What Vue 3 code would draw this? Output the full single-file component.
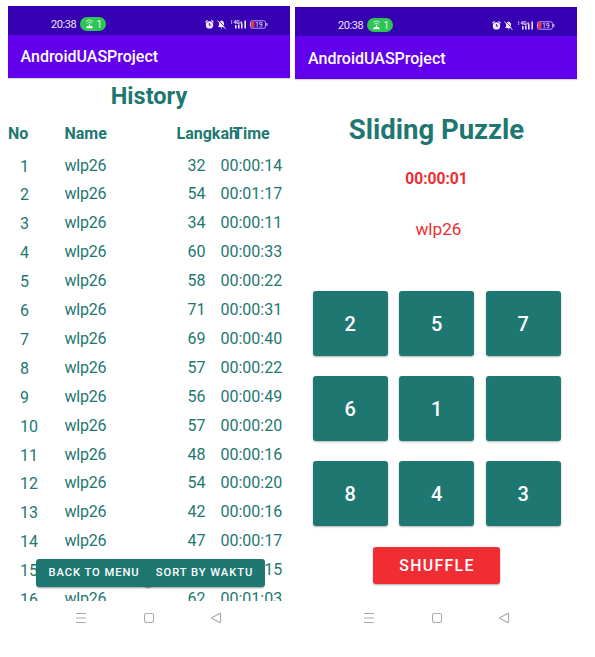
<script setup>
import { h } from 'vue'

const steps = [32, 54, 34, 60, 58, 71, 69, 57, 56, 57, 48, 54, 42, 47, 57, 62]
const times = ['00:14', '01:17', '00:11', '00:33', '00:22', '00:31', '00:40', '00:22',
  '00:49', '00:20', '00:16', '00:20', '00:16', '00:17', '00:15', '01:03']
const rows = steps.map((s, i) => ({ no: i + 1, steps: s, time: '00:' + times[i] }))
const tiles = ['2', '5', '7', '6', '1', '', '8', '4', '3']
const screens = ['history', 'puzzle']

const line = (d, w = 1) => h('path', { d, fill: 'none', stroke: '#fff', 'stroke-width': w, 'stroke-linecap': 'round' })

const HotspotIcon = () => h('svg', { width: 9, height: 10, viewBox: '0 0 9 10' }, [
  line('M1.2 2.4C3 .6 6 .6 7.8 2.4M2.6 4C3.7 3 5.3 3 6.4 4', 0.8),
  h('path', { d: 'M3.9 4.8h1.2v2.1H7L8 9.3H1L2 6.9h1.9z', fill: '#fff' })
])
const AlarmIcon = () => h('svg', { width: 9, height: 9, viewBox: '0 0 9 9' }, [
  line('M.8 1.9L2.2.7M8.2 1.9L6.8.7', 1.1),
  h('circle', { cx: 4.5, cy: 4.9, r: 3.7, fill: '#eeeaf8' }),
  h('path', { d: 'M4.4 3v2.2h1.7', fill: 'none', stroke: '#3700b3', 'stroke-width': 0.9 })
])
const MuteIcon = () => h('svg', { width: 9, height: 9, viewBox: '0 0 9 9' }, [
  h('path', { d: 'M4.5.5C6.2.8 7 2 7 3.5V5.6L8 7H1l1-1.4V3.5C2 2 2.8.8 4.5.5zM3.5 7.5h2L4.5 8.7z', fill: '#eeeaf8' }),
  h('path', { d: 'M1.2 0L8.8 8', stroke: '#3700b3', 'stroke-width': 0.8 }),
  line('M.6.8L8.2 8.6', 0.9)
])
const SignalIcon = () => h('svg', { width: 17, height: 10, viewBox: '0 0 17 10' }, [
  h('path', { d: 'M5 6h1.6v3.5H5zM8 5.4h1.6v4.1H8zM11 4.2h1.6v5.3H11zM14.4 1.6H16v7.9h-1.6z', fill: '#e9e3f7' }),
  h('path', { d: 'M1 1.5h1.2v1.2H1zM1 3.6h1.2v1.2H1z', fill: '#d8ccf2' }),
  h('text', { x: 3.4, y: 5, 'font-size': 5, 'font-weight': 700, fill: '#e9e3f7' }, '4G+')
])
const BatteryIcon = () => h('svg', { width: 18, height: 9, viewBox: '0 0 18 9' }, [
  h('rect', { x: 0.5, y: 0.8, width: 15, height: 7.4, rx: 1.8, fill: 'none', stroke: '#c9bced', 'stroke-width': 0.9 }),
  h('rect', { x: 1.2, y: 1.5, width: 3.2, height: 6, rx: 0.8, fill: '#f5383c' }),
  h('text', { x: 4.9, y: 7, 'font-size': 7, fill: '#e9e3f7' }, '19'),
  line('M16.9 3.5v2', 0.9)
])
</script>

<template>
  <main class="page">
    <section v-for="screen in screens" :key="screen" class="phone" :class="screen">
      <header class="status">
        <span class="clock">20:38</span>
        <span class="hotspot"><HotspotIcon /><span>1</span></span>
        <span class="indicators"><AlarmIcon /><MuteIcon /><SignalIcon /><BatteryIcon /></span>
      </header>
      <div class="appbar">AndroidUASProject</div>

      <div v-if="screen === 'history'" class="body">
        <h1 class="history-title">History</h1>
        <div class="row head">
          <span>No</span><span>Name</span><span class="steps-head">Langkah</span><span class="time-head">Time</span>
        </div>
        <div v-for="r in rows" :key="r.no" class="row">
          <span class="no">{{ r.no }}</span><span class="name">wlp26</span><span class="steps">{{ r.steps }}</span><span>{{ r.time }}</span>
        </div>
        <div class="actions">
          <button class="btn back">Back to menu</button>
          <button class="btn sort">Sort by waktu</button>
        </div>
      </div>

      <div v-else class="body">
        <h1 class="puzzle-title">Sliding Puzzle</h1>
        <div class="timer">00:00:01</div>
        <div class="player">wlp26</div>
        <div class="board">
          <button v-for="(t, i) in tiles" :key="i" class="tile">{{ t }}</button>
        </div>
        <button class="shuffle">Shuffle</button>
      </div>

      <nav class="nav">
        <svg width="12" height="12" viewBox="0 0 12 12"><path d="M1 1.5h10M1 6h10M1 10.5h10" /></svg>
        <svg width="12" height="12" viewBox="0 0 12 12"><rect x="1.5" y="1.5" width="9" height="9" rx="1.8" /></svg>
        <svg width="12" height="12" viewBox="0 0 12 12"><path d="M9.7 1.6Q10.6 1.2 10.6 2.2V9.8Q10.6 10.8 9.7 10.4L2 6.5Q1.2 6 2 5.5z" /></svg>
      </nav>
    </section>
  </main>
</template>

<style>
body {
  margin: 0;
  background: #fff;
}
</style>

<style scoped>
.page {
  display: flex;
  align-items: flex-start;
  gap: 5px;
  width: 595px;
  height: 657px;
  padding: 6px 0 0 8px;
  box-sizing: border-box;
  overflow: hidden;
  font-family: Roboto, "Liberation Sans", sans-serif;
  color: #1e7771;
}
.phone {
  width: 282px;
  flex: none;
}
.puzzle {
  margin-top: 1px;
}
.status {
  display: flex;
  align-items: center;
  height: 29px;
  padding: 7px 22px 0 43px;
  box-sizing: border-box;
  background: #3700b3;
  color: #eeeaf8;
  font-size: 11px;
}
.clock {
  width: 25px;
  letter-spacing: -0.4px;
}
.hotspot {
  display: flex;
  align-items: center;
  gap: 3px;
  width: 26.5px;
  height: 14px;
  margin-left: 3.5px;
  padding-left: 5px;
  box-sizing: border-box;
  border-radius: 7px;
  background: #2dc653;
  font-size: 10px;
}
.indicators {
  display: flex;
  align-items: center;
  gap: 3px;
  margin-left: auto;
}
.indicators svg + svg + svg {
  margin-left: 0.5px;
}
.appbar {
  height: 43px;
  padding-left: 12.5px;
  background: #6200ee;
  color: #fff;
  font-size: 16px;
  font-weight: 500;
  line-height: 44px;
  box-shadow: 0 1px 1px rgba(0, 0, 0, 0.15);
}
.puzzle .appbar {
  padding-left: 13px;
  line-height: 45px;
}
.body {
  position: relative;
  height: 523px;
  overflow: hidden;
}
.puzzle .body {
  display: flex;
  flex-direction: column;
  align-items: center;
}
.history-title {
  margin: 0;
  padding-top: 2px;
  text-align: center;
  font-size: 23.5px;
  line-height: 32px;
}
.row {
  display: grid;
  grid-template-columns: 56.5px 112px 44px 1fr;
  height: 28.92px;
  line-height: 28.92px;
  font-size: 16px;
}
.head {
  height: 39.5px;
  line-height: 43px;
  box-sizing: border-box;
  font-weight: 700;
}
.time-head {
  padding-left: 12.5px;
}
.no {
  padding: 1px 0 0 12px;
}
.name {
  letter-spacing: -0.2px;
}
.steps {
  padding-left: 11px;
}
button {
  border: 0;
  padding: 0;
  color: #fff;
  font-family: inherit;
  font-weight: 500;
}
.actions {
  position: absolute;
  left: 28px;
  top: 480.5px;
  display: flex;
}
.btn {
  height: 28px;
  border-radius: 3px;
  background: #1e7771;
  box-shadow: 0 2px 2px -1px rgba(0, 0, 0, 0.4);
  font-size: 11.2px;
  letter-spacing: 0.95px;
  text-transform: uppercase;
}
.back {
  width: 116px;
}
.sort {
  width: 121px;
  margin-left: -8px;
}
.puzzle-title {
  margin: 32px 0 0 1px;
  font-size: 27.5px;
  line-height: 37px;
}
.timer {
  margin: 19.5px 0 0 1px;
  color: #ef2d32;
  font-size: 15.6px;
  font-weight: 700;
  line-height: 22px;
}
.player {
  margin: 27px 0 0 5px;
  color: #ef2d32;
  font-size: 17.2px;
  line-height: 24px;
}
.board {
  display: grid;
  grid-template-columns: 75px 75px 75px;
  column-gap: 11.4px;
  row-gap: 20px;
  margin: 50px 0 0 1.4px;
}
.tile {
  height: 65px;
  padding-top: 1.5px;
  border-radius: 3px;
  background: #1e7771;
  box-shadow: 0 1px 2px rgba(0, 0, 0, 0.3);
  font-size: 20px;
}
.shuffle {
  width: 127px;
  height: 37px;
  margin: 21px 0 0 1px;
  padding: 1px 0 0 1px;
  border-radius: 3px;
  background: #ef2d32;
  box-shadow: 0 1px 2px rgba(0, 0, 0, 0.35);
  font-size: 15.8px;
  letter-spacing: 1.35px;
  text-transform: uppercase;
}
.nav {
  display: flex;
  gap: 55.5px;
  padding: 11px 0 0 67px;
}
.puzzle .nav {
  padding: 10px 0 0 68px;
}
.nav svg {
  fill: none;
  stroke: #aaa;
  stroke-width: 1.1;
}
</style>
